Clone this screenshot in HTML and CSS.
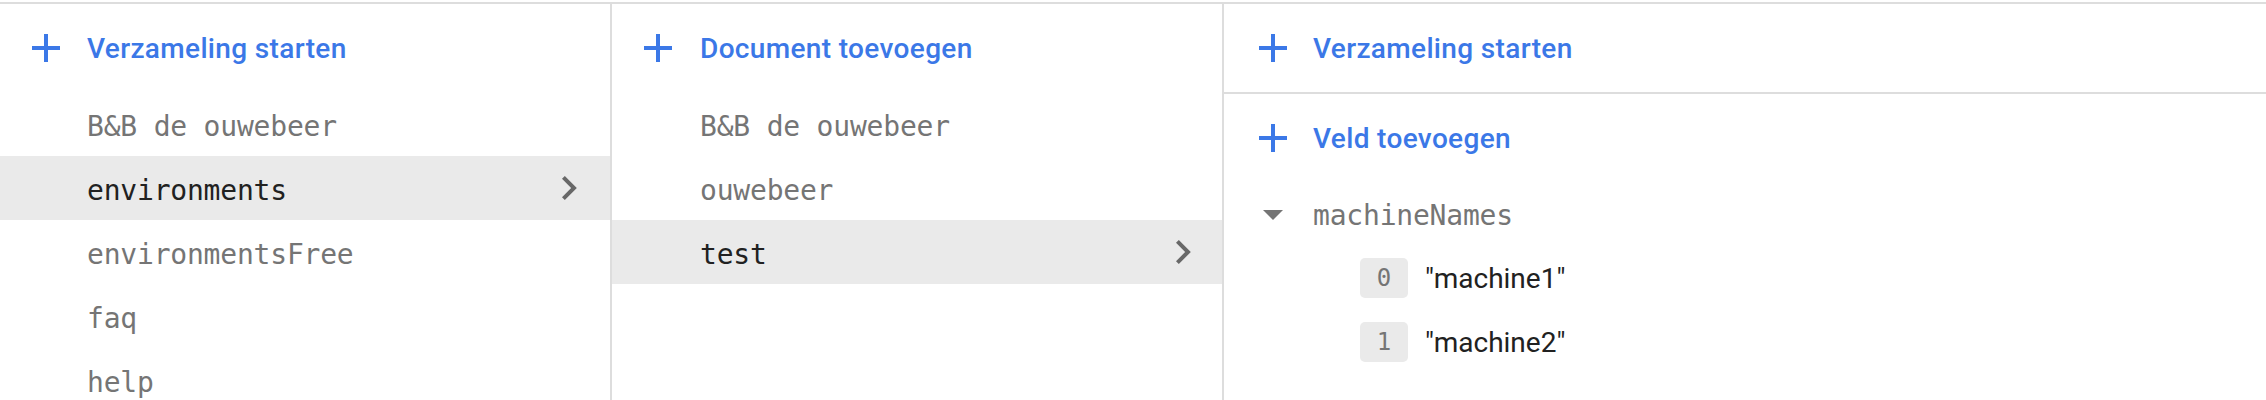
FILE: index.html
```html
<!DOCTYPE html>
<html lang="nl">
<head>
<meta charset="utf-8">
<title>Firestore</title>
<link rel="stylesheet" href="styles.css">
</head>
<body>
<div class="panels">
  <section class="col col-1">
    <div class="head">
      <svg class="plus" viewBox="5 5 14 14"><path d="M19 13h-6v6h-2v-6H5v-2h6V5h2v6h6v2z"/></svg>
      <span class="head-label">Verzameling starten</span>
    </div>
    <div class="row"><span class="key">B&amp;B de ouwebeer</span></div>
    <div class="row selected"><span class="key">environments</span>
      <svg class="chev" viewBox="8.59 6 7.41 12"><path d="M10 6L8.59 7.41 13.17 12l-4.58 4.59L10 18l6-6z"/></svg></div>
    <div class="row"><span class="key">environmentsFree</span></div>
    <div class="row"><span class="key">faq</span></div>
    <div class="row"><span class="key">help</span></div>
  </section>
  <section class="col col-2">
    <div class="head">
      <svg class="plus" viewBox="5 5 14 14"><path d="M19 13h-6v6h-2v-6H5v-2h6V5h2v6h6v2z"/></svg>
      <span class="head-label">Document toevoegen</span>
    </div>
    <div class="row"><span class="key">B&amp;B de ouwebeer</span></div>
    <div class="row"><span class="key">ouwebeer</span></div>
    <div class="row selected"><span class="key">test</span>
      <svg class="chev" viewBox="8.59 6 7.41 12"><path d="M10 6L8.59 7.41 13.17 12l-4.58 4.59L10 18l6-6z"/></svg></div>
  </section>
  <section class="col col-3">
    <div class="head head-divided">
      <svg class="plus" viewBox="5 5 14 14"><path d="M19 13h-6v6h-2v-6H5v-2h6V5h2v6h6v2z"/></svg>
      <span class="head-label">Verzameling starten</span>
    </div>
    <div class="head">
      <svg class="plus" viewBox="5 5 14 14"><path d="M19 13h-6v6h-2v-6H5v-2h6V5h2v6h6v2z"/></svg>
      <span class="head-label">Veld toevoegen</span>
    </div>
    <div class="field">
      <svg class="drop" viewBox="7 10 10 5"><path d="M7 10l5 5 5-5z"/></svg>
      <span class="key">machineNames</span>
    </div>
    <div class="item"><span class="index">0</span><span class="value">"machine1"</span></div>
    <div class="item"><span class="index">1</span><span class="value">"machine2"</span></div>
  </section>
</div>
</body>
</html>
```

FILE: styles.css
```css
html, body {
  margin: 0;
  padding: 0;
  background: #ffffff;
}

.panels {
  margin-top: 2px;
  border-top: 2px solid #dddddd;
  display: flex;
  height: 396px;
  overflow: hidden;
  font-family: Roboto, "Noto Sans", sans-serif;
}

.col {
  display: flex;
  flex-direction: column;
  flex: none;
}

.col-1 {
  width: 610px;
  border-right: 2px solid #dddddd;
}

.col-2 {
  width: 610px;
  border-right: 2px solid #dddddd;
}

.col-3 {
  flex: 1;
}

.head {
  height: 88px;
  flex: none;
  display: flex;
  align-items: center;
  padding-left: 32px;
  gap: 27px;
}

.col-2 .head {
  padding-left: 32px;
  gap: 28px;
}

.col-3 .head {
  padding-left: 35px;
  gap: 26px;
}

.head-divided {
  border-bottom: 2px solid #dddddd;
}

.plus {
  width: 28px;
  height: 28px;
  fill: #3b78e7;
  flex: none;
}

.head-label {
  color: #3b78e7;
  font-size: 28px;
  font-weight: 500;
  letter-spacing: 0.35px;
}

.row {
  height: 64px;
  flex: none;
  display: flex;
  align-items: center;
  justify-content: space-between;
  padding-left: 87px;
  padding-right: 33px;
}

.col-2 .row {
  padding-left: 88px;
  padding-right: 31px;
}

.row.selected {
  background: #eaeaea;
}

.key {
  font-family: "DejaVu Sans Mono", "Liberation Mono", monospace;
  font-size: 28px;
  letter-spacing: -0.2px;
  color: #757575;
  margin-top: 4px;
}

.selected .key {
  color: #212121;
}

.chev {
  width: 14.82px;
  height: 24px;
  fill: #686868;
  flex: none;
}

.field {
  height: 64px;
  flex: none;
  display: flex;
  align-items: center;
  padding-left: 39px;
  gap: 30px;
}

.field .key {
  margin-top: 2px;
}

.drop {
  width: 20px;
  height: 10px;
  fill: #757575;
  flex: none;
  margin-top: 2px;
}

.item {
  height: 64px;
  flex: none;
  display: flex;
  align-items: center;
  padding-left: 136px;
  gap: 17px;
}

.index {
  width: 48px;
  height: 40px;
  border-radius: 5px;
  background: #eaeaea;
  display: flex;
  align-items: center;
  justify-content: center;
  font-family: "DejaVu Sans Mono", "Liberation Mono", monospace;
  font-size: 24px;
  color: #757575;
}

.value {
  font-size: 28px;
  color: #212121;
}
```
